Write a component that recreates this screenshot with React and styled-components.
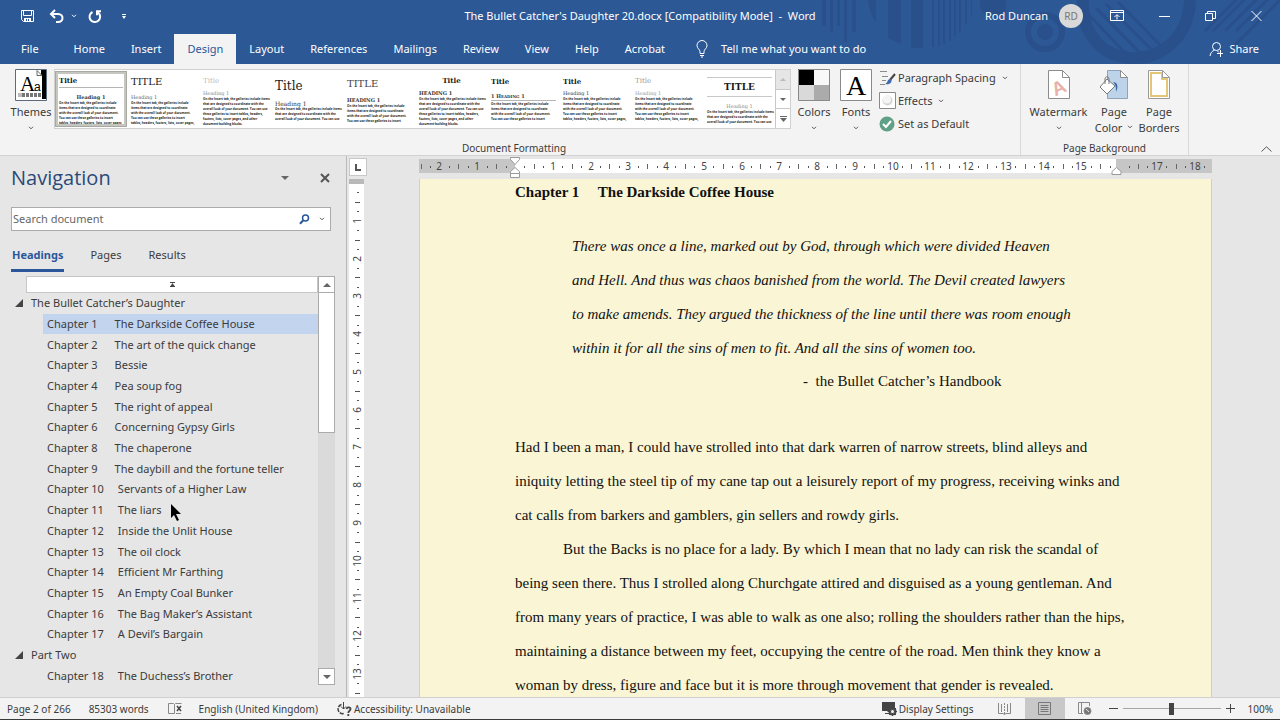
import { useState } from "react";
import styled, { createGlobalStyle, css } from "styled-components";

const GlobalStyle = createGlobalStyle`
  *, *::before, *::after { box-sizing: border-box; }
  html, body, #root { height: 100%; margin: 0; }
  body {
    overflow: hidden;
    background: #e6e6e6;
    color: #3b3b3b;
    font: 11px/16px "Noto Sans", "Open Sans", sans-serif;
  }
  button {
    font: inherit;
    color: inherit;
    background: none;
    border: 0;
    padding: 0;
    margin: 0;
  }
  svg { display: block; flex: none; }
`;

const Window = styled.div`
  height: 100vh;
  display: flex;
  flex-direction: column;
`;

/* ---------- title bar and tabs ---------- */

const Header = styled.header`
  position: relative;
  flex: none;
  background: #2d5896;
  color: #fff;
`;

const Pattern = styled.svg`
  position: absolute;
  top: 0;
  right: 0;
  width: 480px;
  height: 64px;
`;

const TitleBar = styled.div`
  position: relative;
  height: 34px;
  padding-bottom: 2px;
  display: grid;
  grid-template-columns: 1fr auto 1fr;
  align-items: center;
`;

const QuickAccess = styled.div`
  display: flex;
  align-items: center;
  padding-left: 20px;

  button:nth-child(2) { margin-left: 14px; }
  button:nth-child(3) { margin-left: 7px; }
  button:nth-child(4) { margin-left: 11px; }
  button:nth-child(5) { margin-left: 19px; }
`;

const DocTitle = styled.div`
  white-space: pre;
`;

const Account = styled.div`
  display: flex;
  align-items: center;
  justify-content: flex-end;
  padding-right: 18px;
`;

const Avatar = styled.span`
  width: 24px;
  height: 24px;
  margin: 0 27px 0 11px;
  border-radius: 50%;
  background: #d9d9d9;
  color: #777;
  font-size: 10px;
  line-height: 24px;
  text-align: center;
`;

const WindowButtons = styled.div`
  display: flex;
  gap: 35px;
`;

const TabBar = styled.nav`
  position: relative;
  display: flex;
  align-items: stretch;
  height: 30px;
  padding: 0 21px 0 8px;
`;

const Tab = styled.button`
  padding: 0 13px;
  ${(p) => p.$first && css`margin-right: 9px;`}
  ${(p) => p.$active && css`
    background: #f3f3f3;
    color: #2b579a;
  `}
`;

const TellMe = styled.button`
  display: flex;
  align-items: center;
  gap: 13px;
  margin-left: 18px;
`;

const Share = styled.button`
  display: flex;
  align-items: center;
  gap: 5px;
  margin-left: auto;
`;

/* ---------- ribbon ---------- */

const Ribbon = styled.section`
  flex: none;
  display: flex;
  height: 92px;
  padding-left: 8px;
  background: #f3f3f3;
  border-bottom: 1px solid #d2d2d2;
`;

const Group = styled.div`
  display: flex;
  flex-direction: column;
  justify-content: space-between;
  border-right: 1px solid #d8d8d8;
  width: ${(p) => p.$width}px;
`;

const GroupRow = styled.div`
  display: flex;
  padding-top: 5px;
`;

const GroupName = styled.div`
  font-size: 10px;
  line-height: 14px;
  text-align: center;
`;

const BigButton = styled.button`
  display: flex;
  flex-direction: column;
  align-items: center;
  width: ${(p) => p.$width}px;
  white-space: nowrap;

  svg { margin-bottom: 3px; }
  svg.caret { margin: 6px 0 0; }
  span svg.caret { display: inline-block; margin: 0 0 3px 2px; }
`;

const Gallery = styled.div`
  display: flex;
  height: 60px;
  background: #fff;
  border: 1px solid #d0d0d0;
`;

const StyleSet = styled.button`
  width: 72px;
  height: 56px;
  margin-top: 1px;
  padding: 3px 3px 0 4px;
  overflow: hidden;
  display: flex;
  flex-direction: column;
  text-align: left;
  color: #222;
  ${(p) => p.$active && css`
    border: 3px solid #c6c6c0;
    padding: 1px 1px 0;
    outline: 1px solid #a9a9a4;
    outline-offset: -1px;
  `}
`;

const SetTitle = styled.span`
  font-family: "DejaVu Serif", serif;
  font-size: ${(p) => p.$size || 7}px;
  line-height: ${(p) => p.$height || 14}px;
  font-weight: ${(p) => (p.$bold ? 700 : 400)};
  color: ${(p) => p.$color || "#1a1a1a"};
  text-align: ${(p) => p.$align || "left"};
  ${(p) => p.$rule && css`border-bottom: 1px solid #b5b5b5;`}
  ${(p) => p.$boxed && css`
    margin-top: 3px;
    border-top: 1px solid #c8c8c8;
    border-bottom: 1px solid #c8c8c8;
  `}
`;

const SetHeading = styled.span`
  margin-top: ${(p) => p.$gap || 0}px;
  font-family: "DejaVu Serif", serif;
  font-size: ${(p) => p.$size || 5}px;
  line-height: 7px;
  font-weight: ${(p) => (p.$bold ? 700 : 400)};
  color: ${(p) => p.$color || "#333"};
  text-align: ${(p) => p.$align || "left"};
  ${(p) => p.$caps && css`font-variant: small-caps;`}
  ${(p) => p.$rule && css`border-bottom: 1px solid #b5b5b5; margin-bottom: 1px;`}
`;

const SetBody = styled.span`
  font-family: "Open Sans", sans-serif;
  font-size: 3px;
  line-height: 5px;
  font-weight: 700;
  color: #222;
  white-space: pre;
`;

const GalleryScroll = styled.div`
  display: flex;
  flex-direction: column;
  width: 15px;
  border-left: 1px solid #c8c8c8;

  button {
    flex: 1;
    display: flex;
    align-items: center;
    justify-content: center;
  }
  button:first-child { background: #e6e6e6; }
  button + button { border-top: 1px solid #c8c8c8; }
`;

const SmallStack = styled.div`
  display: flex;
  flex-direction: column;
  gap: 6px;
  padding-left: 4px;
`;

const SmallButton = styled.button`
  display: flex;
  align-items: center;
  gap: 2px;
  height: 17px;
  white-space: nowrap;

  .caret { margin-left: 4px; }
`;

const Collapse = styled.button`
  margin: auto 8px 3px auto;
`;

/* ---------- navigation pane ---------- */

const Workspace = styled.main`
  flex: 1;
  min-height: 0;
  display: flex;
`;

const NavPane = styled.aside`
  flex: none;
  width: 347px;
  display: flex;
  flex-direction: column;
  padding: 5px 11px 12px 11px;
  border-right: 1px solid #b9b9b9;
`;

const NavHeader = styled.div`
  display: flex;
  align-items: center;
  padding-right: 5px;

  h2 {
    flex: 1;
    margin: 0;
    font: 400 20px/34px "Open Sans", sans-serif;
    color: #2a4a78;
  }
  button + button { margin-left: 31px; }
`;

const SearchBox = styled.div`
  display: flex;
  align-items: center;
  height: 24px;
  margin: 12px 4px 0 0;
  padding-right: 5px;
  background: #fff;
  border: 1px solid #ababab;

  input {
    flex: 1;
    min-width: 0;
    padding: 0 1px;
    border: 0;
    outline: 0;
    background: none;
    font: inherit;
  }
  input::placeholder { color: #666; opacity: 1; }
  button + button { margin-left: 9px; }
`;

const NavTabs = styled.div`
  display: flex;
  gap: 25px;
  margin-top: 13px;
`;

const NavTab = styled.button`
  height: 28px;
  padding: 0 1px 4px;
  border-bottom: 3px solid transparent;
  ${(p) => p.$active && css`
    border-color: #2b579a;
    color: #2b579a;
    font-weight: 700;
  `}
`;

const Outline = styled.div`
  flex: 1;
  min-height: 0;
  display: flex;
  margin-top: 4px;
`;

const OutlineColumn = styled.div`
  flex: 1;
  display: flex;
  flex-direction: column;
`;

const JumpTop = styled.button`
  display: flex;
  align-items: center;
  justify-content: center;
  height: 17px;
  margin-left: 15px;
  background: #fff;
  border: 1px solid #c6c6c6;
`;

const Headings = styled.ul`
  flex: 1;
  display: grid;
  grid-auto-rows: 1fr;
  margin: 0 0 -1px;
  padding: 0;
  list-style: none;
`;

const Heading = styled.li`
  display: flex;
  align-items: center;
  white-space: pre;
  ${(p) => p.$level === 1 ? css`
    padding-left: 4px;
    gap: 8px;
  ` : css`
    margin-left: 32px;
    padding-left: 4px;
    gap: ${p.$wide ? 14 : 17}px;
  `}
  ${(p) => p.$active && css`background: #c3d4ef;`}
`;

const ScrollBar = styled.div`
  width: 17px;
  display: flex;
  flex-direction: column;
  background: #dadada;

  button {
    flex: none;
    display: flex;
    align-items: center;
    justify-content: center;
    height: 17px;
    background: #fff;
    border: 1px solid #ababab;
  }
`;

const Thumb = styled.div`
  height: 140px;
  background: #fff;
  border: 1px solid #ababab;
  border-top: 0;
  margin-bottom: auto;
`;

/* ---------- document ---------- */

const VerticalBar = styled.div`
  flex: none;
  width: 36px;
  display: flex;
  flex-direction: column;
  gap: 3px;
  padding: 2px 0 0 2px;
  overflow: hidden;
`;

const TabStop = styled.button`
  flex: none;
  width: 18px;
  height: 18px;
  display: flex;
  align-items: center;
  justify-content: center;
  background: #fff;
  border: 1px solid #c8c8c8;
`;

const DocArea = styled.div`
  flex: 1;
  min-width: 0;
  display: flex;
  flex-direction: column;
  align-items: center;
  padding-right: 32px;
  overflow: hidden;
`;

const RulerRow = styled.div`
  flex: none;
  width: 793px;
  height: 23px;
  padding-top: 1px;
`;

const Page = styled.article`
  flex: 1;
  width: 793px;
  padding: 0 95px;
  overflow: hidden;
  background: #faf5d4;
  border: solid #cfcfc4;
  border-width: 0 1px;
  color: #111;
  font: 15px/34px "Liberation Serif", "Times New Roman", serif;
  white-space: pre;

  h1 {
    margin: -4px 0 20px;
    font-size: 15px;
    font-weight: 700;
    line-height: 34px;
  }
  p { margin: 0; }
`;

const Quote = styled.blockquote`
  margin: 0 0 0 57px;
  font-style: italic;
`;

const Source = styled.p`
  padding: 0 0 33px 288px;
  line-height: 32px;
`;

const Indented = styled.p`
  text-indent: 48px;
`;

/* ---------- status bar ---------- */

const StatusBar = styled.footer`
  flex: none;
  display: flex;
  align-items: center;
  height: 23px;
  padding: 0 7px;
  background: #f3f3f3;
  border-top: 1px solid #d0d0d0;
  border-bottom: 1px solid #3a3a3a;
  font-size: 10px;
  white-space: nowrap;
`;

const StatusItem = styled.button`
  display: flex;
  align-items: center;
  gap: 2px;
  height: 100%;
  margin-right: ${(p) => p.$after || 0}px;
  ${(p) => p.$push && css`margin-left: auto;`}
`;

const ViewButton = styled.button`
  display: flex;
  align-items: center;
  justify-content: center;
  width: 40px;
  height: 100%;
  background: ${(p) => (p.$active ? "#c8c8c8" : "none")};
`;

const Zoom = styled.div`
  display: flex;
  align-items: center;
  gap: 5px;
  margin-left: 4px;

  input {
    appearance: none;
    width: 98px;
    height: 14px;
    margin: 0;
    background: linear-gradient(#a6a6a6, #a6a6a6) center / 100% 1px no-repeat;
  }
  input::-webkit-slider-thumb {
    appearance: none;
    width: 5px;
    height: 12px;
    background: #444;
  }
`;

const ZoomValue = styled.button`
  margin-left: 13px;
`;

const Pointer = styled.svg`
  position: absolute;
  left: 170px;
  top: 503px;
`;

/* ---------- drawings ---------- */

const Caret = ({ color = "#555" }) => (
  <svg className="caret" width="6" height="4" viewBox="0 0 6 4" fill="none" stroke={color}>
    <path d="M1 .8 3 2.8 5 .8" />
  </svg>
);

const Triangle = ({ up, color = "#666", size = 8 }) => (
  <svg width={size} height={size / 2} viewBox="0 0 8 4" fill={color}>
    <path d={up ? "M0 4 4 0 8 4Z" : "M0 0 4 4 8 0Z"} />
  </svg>
);

const HeaderPattern = () => (
  <Pattern viewBox="0 0 480 64" fill="#29508a" aria-hidden="true">
    <path d="M22 0h4v26h-4zM30 0h3v32h-3zM37 0h3v26h-3zM44 0h3v42h-3zM52 0h4v32h-4zM68 0h8v22q-6-8-8-22zM88 0h13v44l-13-6zM111 0h12v48h-12zM132 0h2v47h-2zM138 0h2v46h-2zM143 0h2v44h-2zM149 0h2v41h-2zM154 0h2v36h-2zM159 0h2v33h-2zM165 0h2v24h-2zM171 0h1v15h-1z" />
    <path d="M180 0h26q2 18-12 19-16-4-14-19z" />
    <circle cx="245" cy="32" r="17" fill="none" stroke="#29508a" strokeWidth="6" />
    <circle cx="245" cy="32" r="8" />
    <path d="M283 0c-2 34 20 58 51 58s55-24 56-58" fill="none" stroke="#29508a" strokeWidth="12" />
    <g fill="none" stroke="#29508a" strokeWidth="3">
      <path d="m288 14 40 42M296 8l46 47M306 4l46 46M318 2l42 43M405 31l32-32M413 31l32-32M425 31l32-32M436 31l32-32M430 50l50-50" />
    </g>
  </Pattern>
);

const SaveIcon = () => (
  <svg width="15" height="14" viewBox="0 0 15 14" fill="none" stroke="#fff">
    <path d="M1.500 1.500h12v11h-10l-2-2zM3.500 1.500v5h8v-5" />
    <path d="M4 9h7v4H4z" fill="#fff" stroke="none" />
    <path d="M6.500 10v2M8.500 10v2" stroke="#2d5896" />
  </svg>
);

const UndoIcon = () => (
  <svg width="15" height="14" viewBox="0 0 15 14" fill="none" stroke="#fff" strokeWidth="2">
    <path d="M6 1 2 5 6 9M2 5h7c6 0 6 8 0 8H7" />
  </svg>
);

const RedoIcon = () => (
  <svg width="14" height="15" viewBox="0 0 14 15" fill="none" stroke="#fff" strokeWidth="2">
    <path d="M4.500 3A5.300 5.300 0 1 0 10 3.500M13 2.200H9v4" />
  </svg>
);

const CustomizeIcon = () => (
  <svg width="6" height="7" viewBox="0 0 6 7" fill="#fff">
    <path d="M1 1h4v1H1zM1 3h4L3 6z" />
  </svg>
);

const RibbonOptionsIcon = () => (
  <svg width="14" height="12" viewBox="0 0 14 12" fill="none" stroke="#fff">
    <path d="M.5.5h13v10H.5zM1 2.500h12M7 9.500V5M4.500 7 7 4.500 9.500 7" />
  </svg>
);

const MinimizeIcon = () => (
  <svg width="11" height="12" viewBox="0 0 11 12" stroke="#fff"><path d="M0 6.500h11" /></svg>
);

const RestoreIcon = () => (
  <svg width="11" height="12" viewBox="0 0 11 12" fill="none" stroke="#fff">
    <path d="M.5 3.500h7v7h-7zM2.500 3V1.500h8v7H8" />
  </svg>
);

const CloseIcon = () => (
  <svg width="11" height="12" viewBox="0 0 11 12" stroke="#fff"><path d="m.5 1 10 10M10.500 1l-10 10" /></svg>
);

const BulbIcon = () => (
  <svg width="12" height="18" viewBox="0 0 12 18" fill="none" stroke="#fff">
    <path d="M4 13.500v-2C4 9.500 1 8.500 1 5.500a5 5 0 0 1 10 0c0 3-3 4-3 6v2zM4 15.500h4M5 17h2" />
  </svg>
);

const ShareIcon = () => (
  <svg width="15" height="16" viewBox="0 0 15 16" fill="none" stroke="#fff">
    <circle cx="7.500" cy="5.500" r="4" />
    <path d="M1 15c.5-3 2-5 4.500-5.800M8 9.500l2 2M8 12.500h6M11.500 9v7" />
  </svg>
);

const ThemesIcon = () => (
  <svg width="32" height="32" viewBox="0 0 32 32">
    <path d="M.5.5h31v31H.5z" fill="#fff" stroke="#5d6c7c" />
    <path d="M26 1h5v29h-4V7h-1z" fill="#000" />
    <path d="M22 1.500 27 6.500h-5z" fill="#fff" stroke="#666" />
    <text x="5" y="22" fontFamily="Liberation Serif, serif" fontSize="21">A</text>
    <text x="19" y="22" fontFamily="Liberation Sans, sans-serif" fontSize="12">a</text>
    <path d="M3 26h4" stroke="#bbb" strokeWidth="4" />
    <path d="M7 26h19" stroke="#777" strokeWidth="4" strokeDasharray="3 1" />
  </svg>
);

const ColorsIcon = () => (
  <svg width="32" height="32" viewBox="0 0 32 32">
    <path d="M0 0h16v16H0z" />
    <path d="M16 0h16v16H16z" fill="#f8f8f8" />
    <path d="M0 16h16v16H0z" fill="#d9d9d9" />
    <path d="M16 16h16v16H16z" fill="#ababab" />
    <path d="M.5.5h31v31H.5z" fill="none" stroke="#8a8a8a" />
  </svg>
);

const FontsIcon = () => (
  <svg width="32" height="32" viewBox="0 0 32 32">
    <path d="M.5.5h31v31H.5z" fill="#fff" stroke="#8a8a8a" />
    <text x="16" y="26" textAnchor="middle" fontFamily="Liberation Serif, serif" fontSize="28">A</text>
  </svg>
);

const SpacingIcon = () => (
  <svg width="17" height="16" viewBox="0 0 17 16" fill="none" stroke="#8a8a8a">
    <path d="M1 1.500h7M3 6.500h6M3 10.500h4M1 14.500h5" />
    <path d="m16 4-5 6" stroke="#444" strokeWidth="2" />
    <path d="M11 9c-3 0-2 4-5 5 4 1 7-1 6.500-4z" fill="#3f6cae" stroke="none" />
  </svg>
);

const EffectsIcon = () => (
  <svg width="17" height="17" viewBox="0 0 17 17">
    <path d="M.5.5h16v16H.5z" fill="#fff" stroke="#8a8a8a" />
    <circle cx="8.500" cy="8.500" r="5" fill="#d4d4d4" />
    <circle cx="8" cy="7.500" r="4" fill="#f4f4f4" />
  </svg>
);

const DefaultIcon = () => (
  <svg width="17" height="16" viewBox="0 0 17 16">
    <circle cx="8" cy="8" r="7.500" fill="#5fa086" />
    <path d="m4 8 3 3 5-6" fill="none" stroke="#fff" strokeWidth="2" />
  </svg>
);

const WatermarkIcon = () => (
  <svg width="22" height="32" viewBox="0 -1 22 32">
    <path d="M.5.5h14l7 7v21H.5z" fill="#fff" stroke="#8c8c8c" />
    <path d="M14.500.5v7h7" fill="none" stroke="#8c8c8c" />
    <text x="4" y="24" transform="rotate(-25 11 18)" fill="#e8b2a8" fontFamily="Liberation Sans, sans-serif" fontWeight="700" fontSize="19">A</text>
  </svg>
);

const PageColorIcon = () => (
  <svg width="30" height="32" viewBox="0 -1 30 32">
    <path d="M8.500.5h13l7 7v21h-20z" fill="#bdd3ea" stroke="#8ea4bd" />
    <path d="M21.500.5v7h7z" fill="#fff" stroke="#8c8c8c" />
    <path d="m8 9 8 7-8 8-7-7z" fill="#fff" stroke="#777" />
    <path d="M6 14V9c0-3 4-3 4 0v5" fill="none" stroke="#777" />
    <path d="M14 12c4 0 6 4 3 10 0-5 0-7-3-10z" fill="#3768a8" />
  </svg>
);

const BordersIcon = () => (
  <svg width="22" height="32" viewBox="0 -1 22 32">
    <path d="M.5.5h14l7 7v21H.5z" fill="#fff" stroke="#9a9a9a" />
    <path d="M3 3h11v6h5v17H3z" fill="none" stroke="#e3c777" strokeWidth="2" />
    <path d="M14.500.5v7h7z" fill="#fff" stroke="#9a9a9a" />
  </svg>
);

const SearchIcon = () => (
  <svg width="11" height="11" viewBox="0 0 11 11" fill="none" stroke="#2b579a">
    <circle cx="6.500" cy="4" r="3" strokeWidth="1.500" />
    <path d="M4.300 6.300 1 9.800" strokeWidth="2" />
  </svg>
);

const ProofIcon = () => (
  <svg width="15" height="13" viewBox="0 0 15 13" fill="none" stroke="#888">
    <path d="M6.500 11.500h-6v-10h5l1 1zM6.500 2.500l1-1h6M8 11.500h5" />
    <path d="m9 4 4 5M13 4 9 9" stroke="#444" strokeWidth="1.500" />
  </svg>
);

const AccessIcon = () => (
  <svg width="15" height="14" viewBox="0 0 15 14" fill="none" stroke="#444">
    <path d="M4.500 2.500a4.500 4.500 0 1 0 2.500 9" strokeDasharray="4 1" strokeWidth="1.500" />
    <path d="M6.500 0v7M4 4.500l2.500 2.500L9 4.500" />
    <path d="M9.500 7c.5-2.500 4.500-2 4 .3-.4 1.700-2.200 1.700-2.200 3.700M11.300 12v2" strokeWidth="1.800" />
  </svg>
);

const DisplayIcon = () => (
  <svg width="16" height="15" viewBox="0 0 16 15">
    <path d="M1 1h13v9H1zM4 12h5v1H4z" fill="#444" />
    <circle cx="11.500" cy="10.500" r="3" fill="#f3f3f3" stroke="#444" strokeWidth="2" />
    <path d="M11.500 5.500v10M6.500 10.500h10M8 7l7 7M15 7l-7 7" stroke="#444" />
    <circle cx="11.500" cy="10.500" r="1.500" fill="#f3f3f3" />
  </svg>
);

const ReadIcon = () => (
  <svg width="13" height="13" viewBox="0 0 13 13" fill="none" stroke="#888">
    <path d="M.5 1v10.500H5l1.500 1 1.500-1h4.500V1M3.500 2v8M9.500 2v8" />
    <path d="M6.500 1v11" strokeDasharray="2 1" />
  </svg>
);

const PrintIcon = () => (
  <svg width="13" height="13" viewBox="0 0 13 13" fill="none" stroke="#777">
    <path d="M.5.5h12v12H.5zM2.500 3.500h8M2.500 5.500h8M2.500 7.500h8M2.500 9.500h8" />
  </svg>
);

const WebIcon = () => (
  <svg width="14" height="13" viewBox="0 0 14 13" fill="none" stroke="#888">
    <path d="M5 11.500H.5v-11h11V4M3.500 1v10" />
    <circle cx="9.500" cy="9" r="3.500" fill="#777" />
    <path d="M8 7.500c2 0 1 2 3 2" stroke="#eee" />
  </svg>
);

const MoreIcon = () => (
  <svg width="7" height="6" viewBox="0 0 7 6" fill="#666"><path d="M0 0h7v1H0zM0 2h7L3.500 6z" /></svg>
);

/* ---------- rulers ---------- */

const CM = 37.76;

// quarter centimetre marks: number, dot, tick, dot
const marks = (from, to) => {
  const list = [];
  for (let q = from * 4; q <= to * 4; q++) {
    if (q === 0) continue;
    list.push({ pos: q / 4, kind: q % 4 === 0 ? "num" : q % 2 === 0 ? "tick" : "dot" });
  }
  return list;
};

const HorizontalRuler = () => (
  <svg width="793" height="22" viewBox="0 0 793 22">
    <path d="M0 2h793v14H0z" fill="#c6c6c6" />
    <path d="M96 2h601v14H96z" fill="#fff" />
    {marks(-2.5, 18.25).filter((m) => m.pos !== 16).map(({ pos, kind }) => {
      const x = Math.round(96 + pos * CM);
      if (kind === "num") {
        return (
          <text key={pos} x={x} y="13" textAnchor="middle" fontSize="10" fill="#444">
            {Math.abs(pos)}
          </text>
        );
      }
      return kind === "tick"
        ? <path key={pos} d={`M${x} 7h1v5h-1z`} fill="#666" />
        : <path key={pos} d={`M${x} 9h1v2h-1z`} fill="#555" />;
    })}
    <g fill="#fff" stroke="#9a9a9a">
      <path d="M91.500.5h9v2l-4.500 5-4.500-5z" />
      <path d="M96 10.500l4.500 4v6h-9v-6zM91.500 16.500h9" />
      <path d="M697.500 10.500l4.500 4v3h-9v-3z" />
    </g>
  </svg>
);

// the bars above and below take about 210px, marks fill what is left
const VerticalRuler = () => {
  const last = Math.floor(((window.innerHeight - 210) / CM) * 2) / 2;

  return (
    <svg width="16" height="1200" viewBox="0 0 16 1200">
      <path d="M0 0h15v5H0z" fill="#b9b9b9" />
      <path d="M0 5h15v1195H0z" fill="#fff" />
      {marks(0.25, last).map(({ pos, kind }) => {
        const y = Math.round(4 + pos * CM);
        if (kind === "num") {
          return (
            <text key={pos} transform={`translate(12 ${y}) rotate(-90)`} textAnchor="middle" fontSize="10" fill="#444">
              {pos}
            </text>
          );
        }
        return kind === "tick"
          ? <path key={pos} d={`M6 ${y}h5v1H6z`} fill="#555" />
          : <path key={pos} d={`M8 ${y}h2v1H8z`} fill="#555" />;
      })}
    </svg>
  );
};

/* ---------- data ---------- */

const TABS = ["File", "Home", "Insert", "Design", "Layout", "References", "Mailings", "Review", "View", "Help", "Acrobat"];

const WIDE = [
  "On the Insert tab, the galleries include",
  "items that are designed to coordinate",
  "with the overall look of your document.",
  "You can use these galleries to insert",
  "tables, headers, footers, lists, cover pages,",
];

const TIGHT = [
  "On the Insert tab, the galleries include items",
  "that are designed to coordinate with the",
  "overall look of your document. You can use",
  "these galleries to insert tables, headers,",
  "footers, lists, cover pages, and other",
  "document building blocks.",
];

const STYLE_SETS = [
  { title: { text: "Title", height: 12, rule: true, bold: true }, head: { text: "Heading 1", gap: 6, align: "center", bold: true }, body: WIDE },
  { title: { text: "TITLE", size: 10, height: 16 }, head: { text: "Heading 1", gap: 4, color: "#666" }, body: WIDE },
  { title: { text: "Title", color: "#bbb", height: 15 }, head: { text: "Heading 1", gap: 1, color: "#888" }, body: TIGHT },
  { title: { text: "Title", size: 12, height: 24 }, head: { text: "Heading 1", gap: 2, size: 6 }, body: TIGHT.slice(0, 3) },
  { title: { text: "TITLE", size: 10, height: 19, color: "#444" }, head: { text: "HEADING 1", gap: 4, bold: true }, body: WIDE.slice(0, 4) },
  { title: { text: "Title", align: "center", bold: true }, head: { text: "HEADING 1", gap: 2, bold: true }, body: TIGHT },
  { title: { text: "Title", bold: true, height: 15 }, head: { text: "1   Heading 1", gap: 4, bold: true, caps: true, rule: true }, body: WIDE.slice(0, 4) },
  { title: { text: "Title", bold: true, height: 15 }, head: { text: "Heading 1", gap: 1 }, body: WIDE },
  { title: { text: "Title", color: "#999", height: 15 }, head: { text: "Heading 1", gap: 1, color: "#999" }, body: WIDE },
  { title: { text: "TITLE", size: 9, height: 18, align: "center", boxed: true, bold: true }, head: { text: "Heading 1", gap: 6, align: "center", color: "#888" }, body: TIGHT.slice(0, 3) },
];

const HEADINGS = [
  { part: "The Bullet Catcher’s Daughter" },
  { n: 1, text: "The Darkside Coffee House" },
  { n: 2, text: "The art of the quick change" },
  { n: 3, text: "Bessie" },
  { n: 4, text: "Pea soup fog" },
  { n: 5, text: "The right of appeal" },
  { n: 6, text: "Concerning Gypsy Girls" },
  { n: 8, text: "The chaperone" },
  { n: 9, text: "The daybill and the fortune teller" },
  { n: 10, text: "Servants of a Higher Law" },
  { n: 11, text: "The liars" },
  { n: 12, text: "Inside the Unlit House" },
  { n: 13, text: "The oil clock" },
  { n: 14, text: "Efficient Mr Farthing" },
  { n: 15, text: "An Empty Coal Bunker" },
  { n: 16, text: "The Bag Maker’s Assistant" },
  { n: 17, text: "A Devil’s Bargain" },
  { part: "Part Two" },
  { n: 18, text: "The Duchess’s Brother" },
];

const StylePreview = ({ set, active }) => (
  <StyleSet $active={active}>
    <SetTitle
      $size={set.title.size}
      $height={set.title.height}
      $bold={set.title.bold}
      $color={set.title.color}
      $align={set.title.align}
      $rule={set.title.rule}
      $boxed={set.title.boxed}
    >
      {set.title.text}
    </SetTitle>
    <SetHeading
      $gap={set.head.gap}
      $size={set.head.size}
      $bold={set.head.bold}
      $color={set.head.color}
      $align={set.head.align}
      $caps={set.head.caps}
      $rule={set.head.rule}
    >
      {set.head.text}
    </SetHeading>
    <SetBody>{set.body.join("\n")}</SetBody>
  </StyleSet>
);

const App = () => {
  const [tab, setTab] = useState("Design");
  const [navTab, setNavTab] = useState("Headings");
  const [current, setCurrent] = useState(1);
  const [zoom, setZoom] = useState(100);
  const [search, setSearch] = useState("");

  return (
    <Window>
      <GlobalStyle />
      <Header>
        <HeaderPattern />
        <TitleBar>
          <QuickAccess>
            <button aria-label="Save"><SaveIcon /></button>
            <button aria-label="Undo"><UndoIcon /></button>
            <button aria-label="Undo list"><Caret color="#fff" /></button>
            <button aria-label="Redo"><RedoIcon /></button>
            <button aria-label="Customize"><CustomizeIcon /></button>
          </QuickAccess>
          <DocTitle>The Bullet Catcher's Daughter 20.docx [Compatibility Mode]  -  Word</DocTitle>
          <Account>
            Rod Duncan
            <Avatar>RD</Avatar>
            <WindowButtons>
              <button aria-label="Ribbon display options"><RibbonOptionsIcon /></button>
              <button aria-label="Minimize"><MinimizeIcon /></button>
              <button aria-label="Restore"><RestoreIcon /></button>
              <button aria-label="Close"><CloseIcon /></button>
            </WindowButtons>
          </Account>
        </TitleBar>
        <TabBar>
          {TABS.map((name, i) => (
            <Tab key={name} $first={i === 0} $active={name === tab} onClick={() => setTab(name)}>
              {name}
            </Tab>
          ))}
          <TellMe><BulbIcon />Tell me what you want to do</TellMe>
          <Share><ShareIcon />Share</Share>
        </TabBar>
      </Header>

      <Ribbon>
        <Group $width={1013}>
          <GroupRow>
            <BigButton $width={46}><ThemesIcon />Themes<Caret /></BigButton>
            <Gallery>
              {STYLE_SETS.map((set, i) => <StylePreview key={i} set={set} active={i === 0} />)}
              <GalleryScroll>
                <button aria-label="Previous row"><Triangle up size={6} color="#bbb" /></button>
                <button aria-label="Next row"><Triangle size={6} /></button>
                <button aria-label="More"><MoreIcon /></button>
              </GalleryScroll>
            </Gallery>
            <BigButton $width={46}><ColorsIcon />Colors<Caret /></BigButton>
            <BigButton $width={38}><FontsIcon />Fonts<Caret /></BigButton>
            <SmallStack>
              <SmallButton><SpacingIcon />Paragraph Spacing<Caret /></SmallButton>
              <SmallButton><EffectsIcon />Effects<Caret /></SmallButton>
              <SmallButton><DefaultIcon />Set as Default</SmallButton>
            </SmallStack>
          </GroupRow>
          <GroupName>Document Formatting</GroupName>
        </Group>
        <Group $width={168}>
          <GroupRow>
            <BigButton $width={75}><WatermarkIcon />Watermark<Caret /></BigButton>
            <BigButton $width={36}><PageColorIcon />Page<span>Color <Caret /></span></BigButton>
            <BigButton $width={54}><BordersIcon />Page<span>Borders</span></BigButton>
          </GroupRow>
          <GroupName>Page Background</GroupName>
        </Group>
        <Collapse aria-label="Collapse ribbon">
          <svg width="11" height="6" viewBox="0 0 11 6" fill="none" stroke="#555"><path d="M.5 5.500 5.500.8l5 4.700" /></svg>
        </Collapse>
      </Ribbon>

      <Workspace>
        <NavPane>
          <NavHeader>
            <h2>Navigation</h2>
            <button aria-label="Pane options"><Triangle /></button>
            <button aria-label="Close pane">
              <svg width="10" height="10" viewBox="0 0 10 10" stroke="#555" strokeWidth="2"><path d="m1 1 8 8M9 1 1 9" /></svg>
            </button>
          </NavHeader>
          <SearchBox>
            <input
              aria-label="Search document"
              placeholder="Search document"
              value={search}
              onChange={(e) => setSearch(e.target.value)}
            />
            <button aria-label="Search"><SearchIcon /></button>
            <button aria-label="Search options"><Caret /></button>
          </SearchBox>
          <NavTabs>
            {["Headings", "Pages", "Results"].map((name) => (
              <NavTab key={name} $active={name === navTab} onClick={() => setNavTab(name)}>{name}</NavTab>
            ))}
          </NavTabs>
          <Outline>
            <OutlineColumn>
              <JumpTop aria-label="Jump to beginning">
                <svg width="5" height="5" viewBox="0 0 5 5" fill="#444"><path d="M0 0h5v1H0zM2.500 1 4.500 4h-4zM0 4h5v1H0z" /></svg>
              </JumpTop>
              <Headings>
                {HEADINGS.map((h, i) => h.part ? (
                  <Heading key={i} $level={1}>
                    <svg width="8" height="8" viewBox="0 0 8 8" fill="#444"><path d="M8 0v8H0z" /></svg>
                    {h.part}
                  </Heading>
                ) : (
                  <Heading key={i} $level={2} $wide={h.n > 9} $active={i === current} onClick={() => setCurrent(i)}>
                    <span>Chapter {h.n}</span>
                    <span>{h.text}</span>
                  </Heading>
                ))}
              </Headings>
            </OutlineColumn>
            <ScrollBar>
              <button aria-label="Scroll up"><Triangle up /></button>
              <Thumb />
              <button aria-label="Scroll down"><Triangle /></button>
            </ScrollBar>
          </Outline>
        </NavPane>

        <VerticalBar>
          <TabStop aria-label="Tab stop">
            <svg width="6" height="7" viewBox="0 0 6 7" fill="none" stroke="#555" strokeWidth="2"><path d="M1 0v6h5" /></svg>
          </TabStop>
          <VerticalRuler />
        </VerticalBar>

        <DocArea>
          <RulerRow><HorizontalRuler /></RulerRow>
          <Page>
            <h1>Chapter 1     The Darkside Coffee House</h1>
            <Quote>
              There was once a line, marked out by God, through which were divided Heaven<br />
              and Hell. And thus was chaos banished from the world. The Devil created lawyers<br />
              to make amends. They argued the thickness of the line until there was room enough<br />
              within it for all the sins of men to fit. And all the sins of women too.
            </Quote>
            <Source>-  the Bullet Catcher’s Handbook</Source>
            <p>
              Had I been a man, I could have strolled into that dark warren of narrow streets, blind alleys and<br />
              iniquity letting the steel tip of my cane tap out a leisurely report of my progress, receiving winks and<br />
              cat calls from barkers and gamblers, gin sellers and rowdy girls.
            </p>
            <Indented>
              But the Backs is no place for a lady. By which I mean that no lady can risk the scandal of<br />
              being seen there. Thus I strolled along Churchgate attired and disguised as a young gentleman. And<br />
              from many years of practice, I was able to walk as one also; rolling the shoulders rather than the hips,<br />
              maintaining a distance between my feet, occupying the centre of the road. Men think they know a<br />
              woman by dress, figure and face but it is more through movement that gender is revealed.
            </Indented>
          </Page>
        </DocArea>
      </Workspace>

      <StatusBar>
        <StatusItem $after={18}>Page 2 of 266</StatusItem>
        <StatusItem $after={19}>85303 words</StatusItem>
        <StatusItem $after={16} aria-label="Proofing"><ProofIcon /></StatusItem>
        <StatusItem $after={19}>English (United Kingdom)</StatusItem>
        <StatusItem><AccessIcon />Accessibility: Unavailable</StatusItem>
        <StatusItem $push $after={11}><DisplayIcon />Display Settings</StatusItem>
        <ViewButton aria-label="Read mode"><ReadIcon /></ViewButton>
        <ViewButton $active aria-label="Print layout"><PrintIcon /></ViewButton>
        <ViewButton aria-label="Web layout"><WebIcon /></ViewButton>
        <Zoom>
          <button aria-label="Zoom out"><svg width="9" height="9" viewBox="0 0 9 9" stroke="#444"><path d="M0 4.500h9" /></svg></button>
          <input type="range" aria-label="Zoom" min="0" max="200" value={zoom} onChange={(e) => setZoom(+e.target.value)} />
          <button aria-label="Zoom in"><svg width="9" height="9" viewBox="0 0 9 9" stroke="#444"><path d="M0 4.500h9M4.500 0v9" /></svg></button>
        </Zoom>
        <ZoomValue>{zoom}%</ZoomValue>
      </StatusBar>

      <Pointer width="12" height="19" viewBox="0 0 12 19">
        <path d="M1 1v14l3-3 3 6 2-1-3-6h5z" />
      </Pointer>
    </Window>
  );
};

export default App;
